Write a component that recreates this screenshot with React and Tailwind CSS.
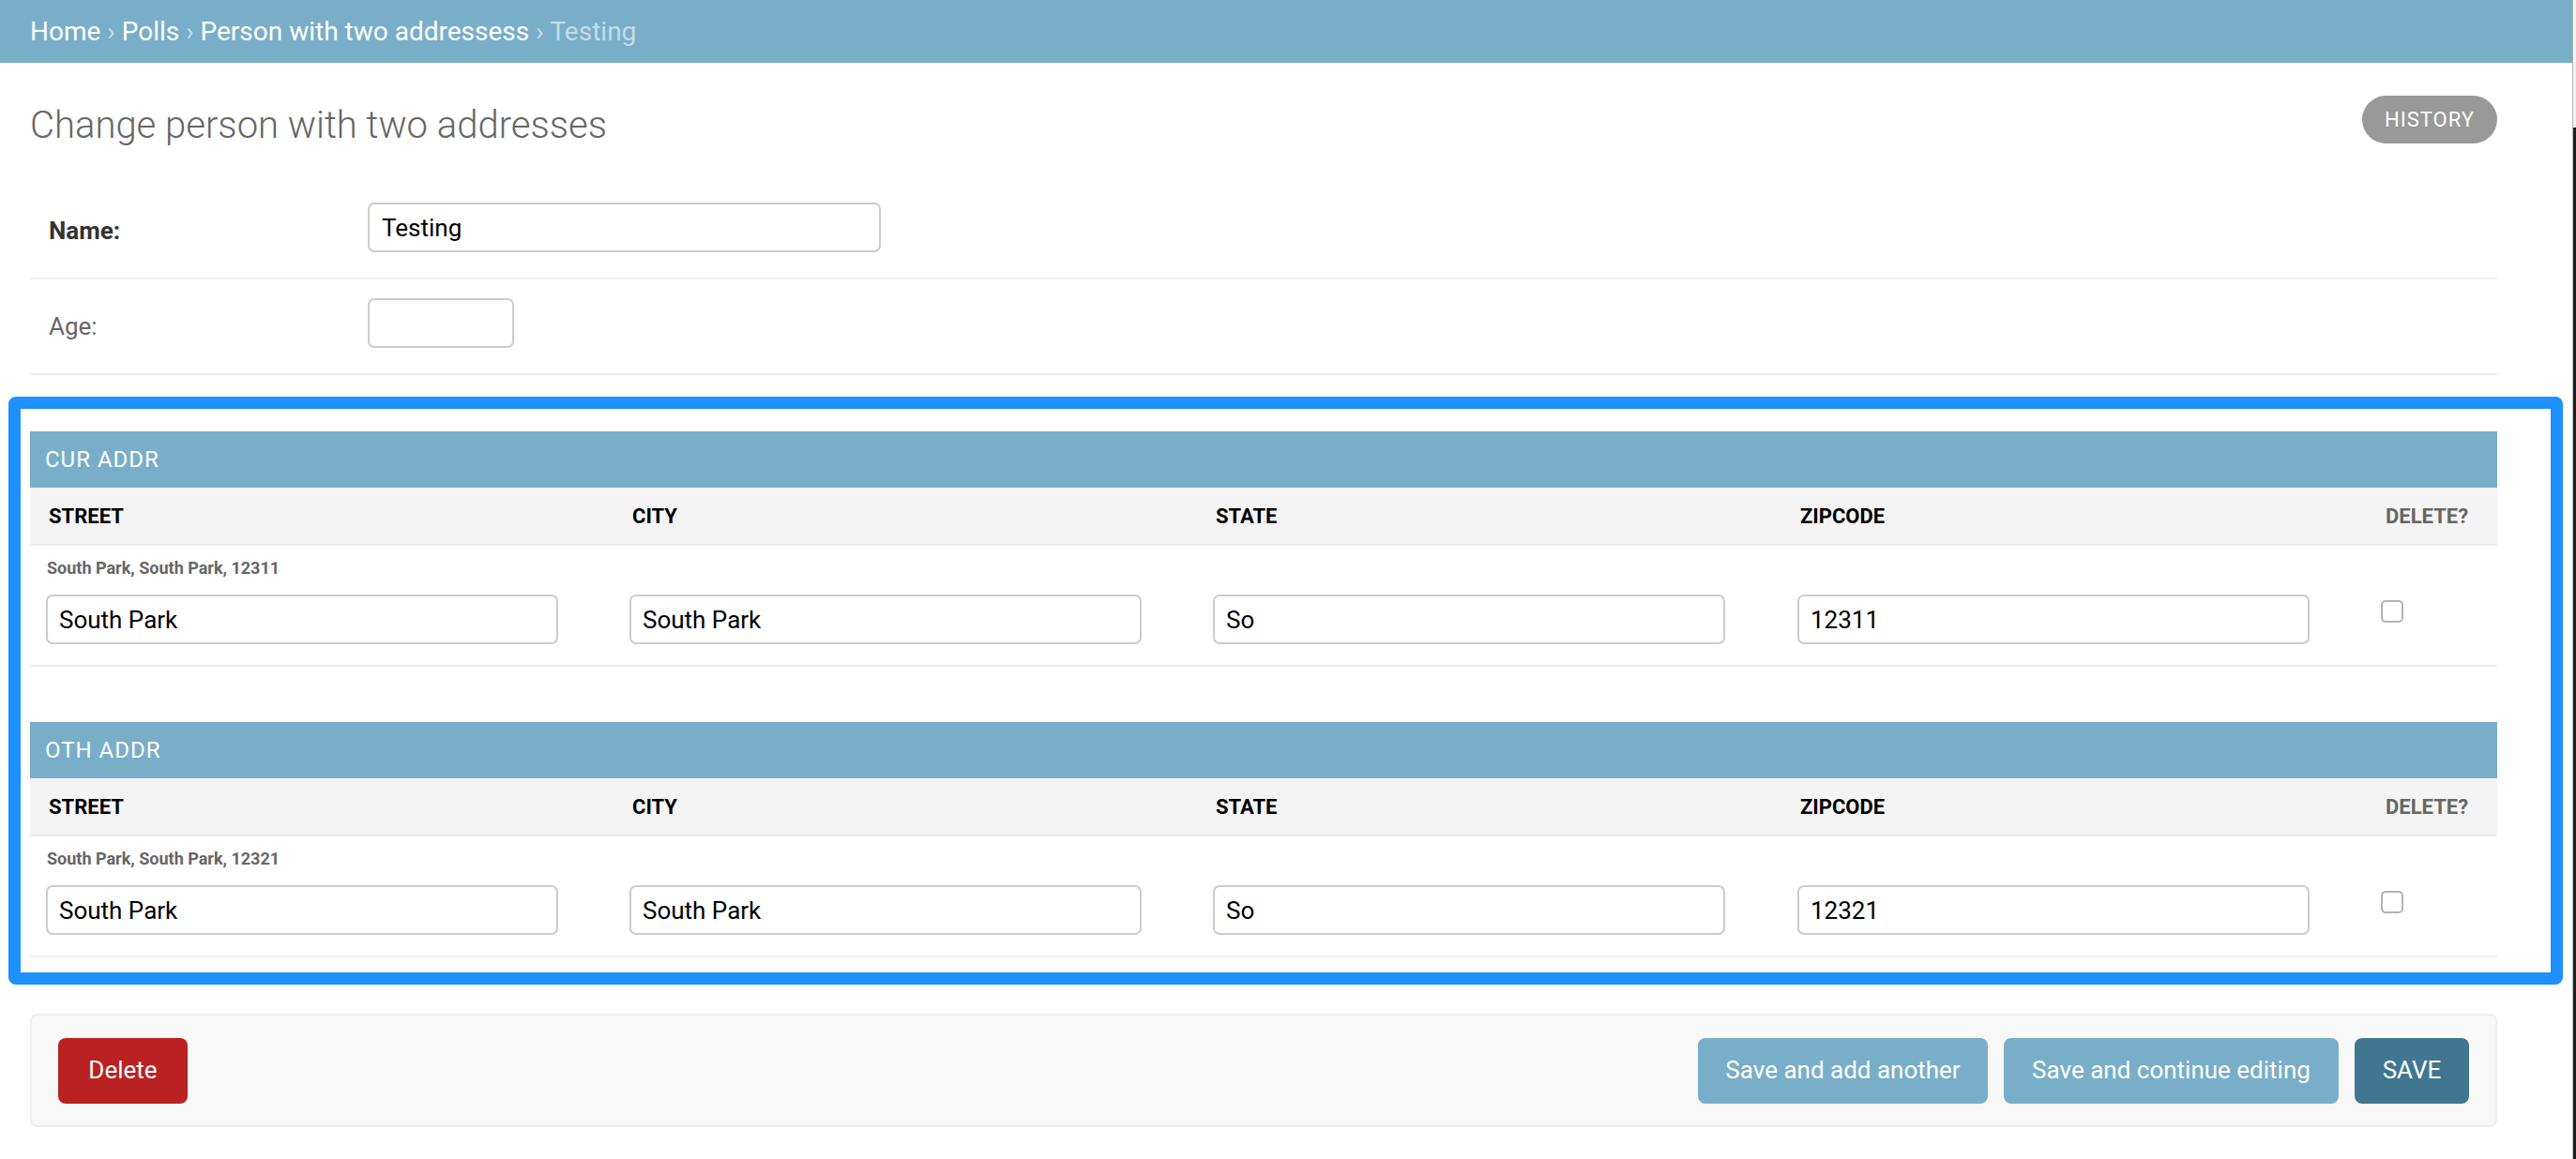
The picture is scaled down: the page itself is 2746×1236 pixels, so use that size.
import React from 'react';

const cols = ['STREET', 'CITY', 'STATE', 'ZIPCODE'];

const InlineGroup = ({ title, original, values, className = '' }) => {
  return (
    <div className={className}>
      <div className="h-[60px] bg-[#79aec8] flex items-center pl-[16px] text-[24px] tracking-[1px] text-white uppercase">
        {title}
      </div>
      <div className="h-[62px] bg-[#f4f4f4] border-b-2 border-[#eee] grid grid-cols-[622px_622px_623px_624px_139px] items-center text-[22px] font-bold">
        {cols.map((c) => (
          <div key={c} className="pl-[20px] text-black">{c}</div>
        ))}
        <div className="pl-[20px] text-[#666]">DELETE?</div>
      </div>
      <div className="border-b-2 border-[#eee] pt-[13px] pb-[22px]">
        <p className="pl-[18px] text-[18px] leading-[21px] font-bold text-[#666]">{original}</p>
        <div className="mt-[18px] grid grid-cols-[622px_622px_623px_624px_139px]">
          {values.map((v, i) => (
            <div key={i} className="pl-[17px]">
              <input
                readOnly
                value={v}
                className="w-[546px] h-[53px] border-2 border-[#ccc] rounded-[7px] pl-[12px] text-[26px] text-black bg-white outline-none"
              />
            </div>
          ))}
          <div className="pl-[15px] pt-[6px]">
            <div className="w-[24px] h-[24px] border-2 border-[#b3b3b3] rounded-[5px] bg-white" />
          </div>
        </div>
      </div>
    </div>
  );
};

const App = () => {
  return (
    <div className="flex min-h-screen w-full bg-white font-['Roboto',sans-serif]">
      <div className="w-[2742px] shrink-0">
        {/* breadcrumbs */}
        <div className="h-[67px] bg-[#79aec8] flex items-center pl-[32px] text-[28px] text-[#c4dce8] whitespace-pre">
          <span className="text-white">Home</span>
          {' › '}
          <span className="text-white">Polls</span>
          {' › '}
          <span className="text-white">Person with two addressess</span>
          {' › '}
          <span>Testing</span>
        </div>

        <div className="pl-[32px] pr-[80px] pt-[35px] pb-[34px]">
          <div className="flex items-start justify-between">
            <h1 className="mt-[8px] text-[40px] leading-[48px] font-light text-[#666]">
              Change person with two addresses
            </h1>
            <a className="h-[51px] px-[24px] rounded-full bg-[#999] text-white text-[22px] tracking-[1px] flex items-center">
              HISTORY
            </a>
          </div>

          {/* main fieldset */}
          <div className="mt-[38px]">
            <div className="flex border-b-2 border-[#eee] pl-[20px] pt-[20px] pb-[27px]">
              <label className="w-[340px] pt-[15px] text-[26px] leading-[30px] font-bold text-[#333]">Name:</label>
              <input
                readOnly
                value="Testing"
                className="w-[547px] h-[53px] border-2 border-[#ccc] rounded-[7px] pl-[13px] text-[26px] text-black outline-none"
              />
            </div>
            <div className="flex border-b-2 border-[#eee] pl-[20px] pt-[20px] pb-[27px]">
              <label className="w-[340px] pt-[15px] text-[26px] leading-[30px] text-[#666]">Age:</label>
              <input
                readOnly
                value=""
                className="w-[156px] h-[53px] border-2 border-[#ccc] rounded-[7px] pl-[13px] text-[26px] text-black outline-none"
              />
            </div>
          </div>

          {/* highlighted inlines */}
          <div className="-ml-[23px] -mr-[70px] mt-[23px] border-[13px] border-[#1e90ff] rounded-[8px] pl-[10px] pr-[57px] pt-[24px] pb-[16px]">
            <InlineGroup
              title="Cur addr"
              original="South Park, South Park, 12311"
              values={['South Park', 'South Park', 'So', '12311']}
              className="mb-[59px]"
            />
            <InlineGroup
              title="Oth addr"
              original="South Park, South Park, 12321"
              values={['South Park', 'South Park', 'So', '12321']}
            />
          </div>

          {/* submit row */}
          <div className="mt-[31px] h-[121px] border-2 border-[#eee] bg-[#f8f8f8] rounded-[8px] px-[28px] flex items-center justify-between">
            <button className="w-[138px] h-[70px] rounded-[8px] bg-[#ba2121] text-white text-[26px]">Delete</button>
            <div className="flex gap-[17px]">
              <button className="w-[309px] h-[70px] rounded-[8px] bg-[#79aec8] text-white text-[26px]">Save and add another</button>
              <button className="w-[357px] h-[70px] rounded-[8px] bg-[#79aec8] text-white text-[26px]">Save and continue editing</button>
              <button className="w-[122px] h-[70px] rounded-[8px] bg-[#417690] text-white text-[26px]">SAVE</button>
            </div>
          </div>
        </div>
      </div>

      {/* edge of the window behind */}
      <div className="flex-1 flex flex-col border-l border-[#b5b5b5]">
        <div className="h-[136px] bg-[#f2f2f2]" />
        <div className="flex-1 bg-[#1d1f24]" />
      </div>
    </div>
  );
};

export default App;
